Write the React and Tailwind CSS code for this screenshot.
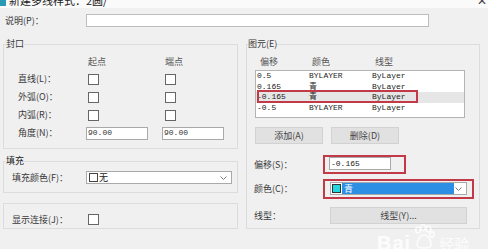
import React from "react";

const mono = "font-['Liberation_Mono','Noto_Sans_CJK_SC',monospace] text-[8px]";

function Check({ className = "" }) {
  return <div className={"w-[11px] h-[11px] border border-[#666] bg-white " + className} />;
}

function Chevron() {
  return (
    <svg width="7" height="4" viewBox="0 0 7 4">
      <path d="M0.5 0.5 L3.5 3.5 L6.5 0.5" fill="none" stroke="#7a7a7a" strokeWidth="1" />
    </svg>
  );
}

function Paw() {
  return (
    <svg width="22" height="26" viewBox="0 0 22 26" fill="none" stroke="#ffffff" strokeWidth="1.6">
      <ellipse cx="5" cy="6" rx="2.3" ry="3" />
      <ellipse cx="10" cy="3.5" rx="2.3" ry="3" />
      <ellipse cx="15.5" cy="5" rx="2.3" ry="3" />
      <ellipse cx="19" cy="10.5" rx="2" ry="2.6" />
      <path d="M4 21 C4 15 8 11 11 11 C15 11 18 15 18 21 C18 25 4 25 4 21 Z" />
    </svg>
  );
}

const rows = [
  { off: "0.5", color: "BYLAYER", type: "ByLayer" },
  { off: "0.165", color: "青", type: "ByLayer" },
  { off: "-0.165", color: "青", type: "ByLayer", sel: true },
  { off: "-0.5", color: "BYLAYER", type: "ByLayer" },
];

export default function App() {
  return (
    <div className="w-[488px] h-[249px] bg-[#f0f0f0] overflow-hidden relative font-['Noto_Sans_CJK_SC',sans-serif] text-[9px] text-[#3a3a3a]">
      {/* title bar, cut off at the top */}
      <div className="h-[8px] bg-[#fafafa] overflow-hidden flex">
        <div className="-mt-[6px] flex items-center gap-[3px] h-[13px]">
          <div className="w-[6px] h-[11px] bg-[#2a9bb5]" />
          <span className="text-[11px] leading-[13px] text-[#222]">新建多线样式：2圆/</span>
        </div>
        <span className="ml-auto mr-[1px] -mt-[7px] text-[12px] leading-[13px] text-[#444]">✕</span>
      </div>

      {/* description */}
      <div className="mt-[6px] flex items-center h-[13px]">
        <span className="w-[86px] pl-[5px] leading-[10px]">说明(P)：</span>
        <div className="w-[343px] h-[13px] bg-white border border-[#bdbdbd]" />
      </div>

      <div className="mt-[12px] flex items-start">
        {/* left column */}
        <div className="ml-[3px] w-[235px]">
          <fieldset className="border border-[#dcdcdc] pt-[5px] pb-[6px] min-w-0">
            <legend className="ml-[2px] leading-[10px]">封口</legend>
            <div className="flex items-center h-[16px] text-[#555]">
              <span className="w-[82px]" />
              <span className="w-[76px] pl-[2px] leading-[10px]">起点</span>
              <span className="pl-[3px] leading-[10px]">端点</span>
            </div>
            {["直线(L)：", "外弧(O)：", "内弧(R)："].map((l) => (
              <div key={l} className="flex items-center h-[18px]">
                <span className="w-[82px] pl-[14px] leading-[10px]">{l}</span>
                <div className="w-[76px]">
                  <Check className="ml-[2px]" />
                </div>
                <Check className="ml-[3px]" />
              </div>
            ))}
            <div className="flex items-center h-[18px]">
              <span className="w-[82px] pl-[14px] leading-[10px]">角度(N)：</span>
              <div className="w-[76px]">
                <div className={"w-[62px] h-[13px] bg-white border border-[#a9a9a9] pl-[1px] flex items-center text-[#333] " + mono}>90.00</div>
              </div>
              <div className={"w-[62px] h-[13px] bg-white border border-[#a9a9a9] pl-[1px] flex items-center text-[#333] " + mono}>90.00</div>
            </div>
          </fieldset>

          <fieldset className="mt-[7px] border border-[#dcdcdc] pt-[5px] pb-[8px] min-w-0">
            <legend className="ml-[2px] leading-[10px] text-[#222]">填充</legend>
            <div className="flex items-center h-[13px]">
              <span className="w-[82px] pl-[8px] leading-[10px]">填充颜色(F)：</span>
              <div className="w-[146px] h-[13px] bg-white border border-[#a9a9a9] flex items-center pl-[2px] pr-[4px]">
                <div className="w-[9px] h-[9px] border border-[#444] bg-white" />
                <span className="ml-[1px] leading-[10px] text-[#222]">无</span>
                <span className="ml-auto flex">
                  <Chevron />
                </span>
              </div>
            </div>
          </fieldset>

          <div className="mt-[10px] border border-[#dcdcdc] pt-[10px] pb-[3px]">
            <div className="flex items-center h-[11px]">
              <span className="w-[82px] pl-[8px] leading-[10px]">显示连接(J)：</span>
              <Check className="ml-[2px]" />
            </div>
          </div>
        </div>

        {/* right column */}
        <fieldset className="ml-[8px] w-[234px] border border-[#dcdcdc] pb-[4px] min-w-0">
          <legend className="ml-[1px] leading-[10px]">图元(E)</legend>
          <div className="mt-[5px] flex items-center h-[16px] pl-[13px] text-[#555]">
            <span className="w-[52px] leading-[10px]">偏移</span>
            <span className="w-[63px] leading-[10px]">颜色</span>
            <span className="leading-[10px]">线型</span>
          </div>

          <div className="ml-[8px] w-[210px] h-[48px] bg-white border border-[#b4b4b4]">
            {rows.map((r) => (
              <div
                key={r.off}
                className={"relative flex items-center h-[10.5px] pl-[1px] text-[#222] " + mono + (r.sel ? " bg-[#e6e6e6]" : "")}
              >
                <span className="w-[52px]">{r.off}</span>
                <span className="w-[63px]">{r.color}</span>
                <span>{r.type}</span>
                {r.sel && (
                  <div className="absolute left-[1px] top-[-2px] w-[161px] h-[13px] border-2 border-[#c23a47]" />
                )}
              </div>
            ))}
          </div>

          <div className="mt-[9px] ml-[8px] flex gap-[8px]">
            <button className="w-[68px] h-[17px] bg-[#e1e1e1] border border-[#d2d2d2] leading-[10px] text-[#444]">添加(A)</button>
            <button className="w-[68px] h-[17px] bg-[#e1e1e1] border border-[#d2d2d2] leading-[10px] text-[#444]">删除(D)</button>
          </div>

          <div className="mt-[11px] ml-[7px] flex items-center">
            <span className="w-[69px] leading-[10px]">偏移(S)：</span>
            <div className="border-2 border-[#c23a47] pl-[4px] pr-[13px] pb-[2px]">
              <div className={"w-[62px] h-[13px] bg-white border border-[#a9a9a9] pl-[1px] flex items-center text-[#222] " + mono}>-0.165</div>
            </div>
          </div>

          <div className="mt-[5px] ml-[7px] flex items-center">
            <span className="w-[69px] leading-[10px]">颜色(C)：</span>
            <div className="border-2 border-[#c23a47] pl-[5px] pr-[5px] pt-[1px] pb-[2px]">
              <div className="w-[137px] h-[13px] bg-white border border-[#a9a9a9] flex items-center pl-[1px]">
                <div className="w-[9px] h-[9px] border border-[#333] bg-[#22d8e0]" />
                <div className="ml-[1px] w-[112px] h-[11px] bg-[#2d8fe3] flex items-center pl-[2px]">
                  <span className="leading-[10px] text-white">青</span>
                </div>
                <span className="ml-auto mr-[4px] flex">
                  <Chevron />
                </span>
              </div>
            </div>
          </div>

          <div className="mt-[8px] ml-[7px] flex items-center">
            <span className="w-[76px] leading-[10px]">线型：</span>
            <button className="w-[137px] h-[17px] bg-[#e1e1e1] border border-[#d2d2d2] leading-[10px] text-[#444]">线型(Y)...</button>
          </div>
        </fieldset>
      </div>

      {/* watermark */}
      <div className="absolute left-[377px] top-[224px] flex items-end text-white/80">
        <span className="font-['Liberation_Sans',sans-serif] font-bold text-[20px] leading-[20px] tracking-[1px] -mb-[3px]">Bai</span>
        <span className="ml-[2px] opacity-80">
          <Paw />
        </span>
        <span className="ml-[4px] text-[15px] leading-[16px] -mb-[2px]">经验</span>
      </div>
    </div>
  );
}
